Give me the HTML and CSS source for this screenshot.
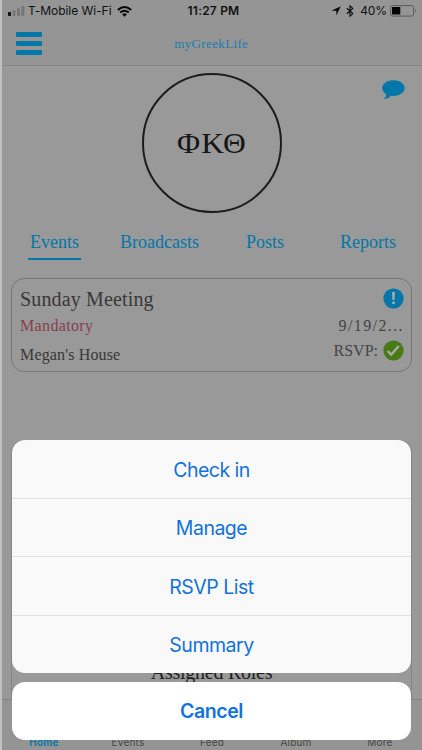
FILE: index.html
```html
<!DOCTYPE html>
<html lang="en">
<head>
<meta charset="utf-8">
<title>myGreekLife</title>
<link rel="stylesheet" href="styles.css">
</head>
<body>
<div class="phone">
  <header class="header">
    <div class="status">
      <div class="carrier">
        <svg width="17" height="10" viewBox="0 0 17 10"><rect x="0" y="6" width="3" height="4" rx=".7" fill="#111"/><g fill="#777"><rect x="4.5" y="4.3" width="3" height="5.7" rx=".7"/><rect x="9" y="2.4" width="3" height="7.6" rx=".7"/><rect x="13.4" y="0" width="3" height="10" rx=".7"/></g></svg>
        <span class="network">T-Mobile Wi-Fi</span>
        <svg class="wifi" width="15" height="11" viewBox="0 0 15 11" fill="none" stroke="#080808" stroke-width="2"><path d="M.8 4.1Q7.5-2 14.2 4.1M3.2 6.6Q7.5 2.8 11.8 6.6"/><path d="M5.1 8.4Q7.5 6.3 9.9 8.4L7.5 10.8Z" fill="#080808" stroke="none"/></svg>
      </div>
      <div class="clock">11:27 PM</div>
      <div class="power">
        <svg width="10" height="10" viewBox="0 0 10 10"><path d="M9.7.3 5.4 9.6V4.7H.4Z" fill="#080808"/></svg>
        <svg class="bluetooth" width="8" height="12" viewBox="0 0 8 12"><path d="M.8 3.2 6.8 8.6 4 11.2V.8L6.8 3.4.8 8.8" fill="none" stroke="#111" stroke-width="1.15"/></svg>
        <span class="percent">40%</span>
        <svg width="27" height="12" viewBox="0 0 27 12"><rect x=".6" y=".6" width="23" height="10.5" rx="2" fill="none" stroke="#5a5a5a"/><rect x="2" y="2" width="8.3" height="7.6" rx=".6" fill="#050505"/><path d="M25 3.8q2.2 2 0 4z" fill="#666"/></svg>
      </div>
    </div>
    <div class="navbar">
      <div class="menu"><i></i><i></i><i></i></div>
      <h1 class="brand">myGreekLife</h1>
    </div>
  </header>

  <main class="main">
    <section class="profile">
      <div class="crest"><span>ΦΚΘ</span></div>
      <svg class="chat" width="23" height="20" viewBox="0 0 23 20"><path d="M11.5.2C5.1.2.2 3.6.2 8c0 2.600 1.500 4.800 4 6.300-.2 2-1 3.500-2.500 4.800 2.700.2 5.200-1 7.100-3.300.9.1 1.800.2 2.700.2 6.300 0 11.200-3.500 11.200-7.900S17.800.2 11.500.2Z" fill="#0277a8"/></svg>
    </section>
    <nav class="tabs">
      <span class="tab tab-active">Events</span>
      <span class="tab">Broadcasts</span>
      <span class="tab">Posts</span>
      <span class="tab">Reports</span>
    </nav>
    <article class="event">
      <div class="details">
        <h2 class="title">Sunday Meeting</h2>
        <div class="mandatory">Mandatory</div>
        <div class="place">Megan's House</div>
      </div>
      <div class="meta">
        <svg width="21" height="21" viewBox="0 0 21 21"><circle cx="10.5" cy="10.5" r="10.1" fill="#0277a8"/><path d="M9 4h3l-.5 8H9.5Z" fill="#aaa"/><circle cx="10.5" cy="14.7" r="1.5" fill="#aaa"/></svg>
        <div class="date">9/19/2...</div>
        <div class="rsvp"><span>RSVP:</span><svg width="21" height="21" viewBox="0 0 21 21"><circle cx="10.5" cy="10.5" r="10.1" fill="#4a7a15"/><path d="m4.7 11 3.6 3.6 7.5-8.5" fill="none" stroke="#aaa" stroke-width="2.3"/></svg></div>
      </div>
    </article>
    <section class="roles"><h2>Assigned Roles</h2></section>
  </main>

  <footer class="footer">
    <span class="current">Home</span><span>Events</span><span>Feed</span><span>Album</span><span>More</span>
  </footer>

  <div class="sheet">
    <div class="options">
      <button class="option">Check in</button>
      <button class="option">Manage</button>
      <button class="option">RSVP List</button>
      <button class="option">Summary</button>
    </div>
    <button class="cancel">Cancel</button>
  </div>
</div>
</body>
</html>
```
FILE: styles.css
```css
* { box-sizing: border-box; }
body { margin: 0; font-family: "Liberation Serif", serif; }
h1, h2 { margin: 0; font-weight: 400; }
svg { display: block; flex: none; }
button { border: 0; padding: 0; background: none; }

.phone {
  position: relative;
  display: flex;
  flex-direction: column;
  width: 422px;
  height: 750px;
  overflow: hidden;
  background: #999;
  border-left: 2px solid #c0c0c0;
}
.header { height: 66px; background: #959595; border-bottom: 1px solid #848484; }
.status {
  display: grid;
  grid-template-columns: 1fr auto 1fr;
  height: 22px;
  align-items: center;
  padding: 0 5px 0 6px;
  font: 12px/22px Inter, sans-serif;
  color: #111;
}
.carrier, .power { display: flex; align-items: center; }
.network { margin-left: 3px; width: 84px; white-space: nowrap; letter-spacing: -.05px; }
.wifi { margin-left: 5px; }
.clock { font-weight: 600; letter-spacing: .2px; margin-left: 2px; }
.power { justify-content: flex-end; }
.bluetooth { margin-left: 5px; }
.percent { margin: 0 3px 0 6px; letter-spacing: -.1px; }
.navbar {
  display: grid;
  grid-template-columns: 1fr auto 1fr;
  align-items: center;
  height: 43px;
  padding: 0 15px 0 13.5px;
}
.menu { display: grid; gap: 4px; width: 26.5px; }
.menu i { height: 4.7px; border-radius: 1px; background: #0277a8; }
.brand { color: #1a7fae; font-size: 13px; letter-spacing: .35px; }

.main { flex: 1; display: flex; flex-direction: column; }
.profile { display: grid; grid-template-columns: 1fr 140px 1fr; height: 155px; padding: 7px 17px 0; }
.crest {
  grid-column: 2;
  display: grid;
  place-items: center;
  width: 140px;
  height: 140px;
  margin-left: -.5px;
  border: 2px solid #1c1c1c;
  border-radius: 50%;
  color: #161616;
  font-size: 29px;
  line-height: 32px;
}
.crest span { letter-spacing: 1px; margin-right: -1px; transform: scaleX(1.09); }
.chat { justify-self: end; margin-top: 7px; }
.tabs {
  display: grid;
  grid-template-columns: 90px 126px 94px auto;
  justify-items: start;
  height: 57px;
  padding: 9px 0 0 26px;
  color: #0277a8;
  font-size: 18px;
  line-height: 25px;
}
.tab { height: 30px; padding: 0 2px; }
.tab-active { border-bottom: 2px solid #0277a8; }
.event {
  display: flex;
  justify-content: space-between;
  height: 94px;
  margin: 0 10px 0 9px;
  padding: 9px 7px 8px 8px;
  border: 1px solid #777;
  border-radius: 13px;
  color: #383838;
}
.title { font-size: 20px; line-height: 22px; letter-spacing: .15px; }
.mandatory { margin-top: 5px; color: #87404f; font-size: 16px; line-height: 22px; letter-spacing: .35px; }
.place { margin-top: 8px; font-size: 16px; line-height: 20px; letter-spacing: .15px; }
.meta { display: flex; flex-direction: column; align-items: flex-end; color: #444; font-size: 16px; }
.date { margin-top: 7px; line-height: 20px; letter-spacing: 1.4px; }
.rsvp { display: flex; align-items: center; gap: 5px; height: 21px; margin-top: 4px; }
.roles {
  flex: 1;
  margin: 68px 10px 0 9px;
  border: 1px solid #858585;
  border-bottom: 0;
  border-radius: 13px 13px 0 0;
  padding-top: 219px;
  text-align: center;
  color: #202020;
}
.roles h2 { font-size: 20px; line-height: 24px; letter-spacing: -.25px; }
.footer {
  display: grid;
  grid-template-columns: repeat(5, 84px);
  height: 51px;
  padding-top: 36px;
  background: #949494;
  border-top: 1px solid #848484;
  color: #484848;
  text-align: center;
  font: 10px/13px Inter, sans-serif;
  letter-spacing: .2px;
}
.footer .current { color: #0277a8; font-weight: 600; }

.sheet {
  position: absolute;
  inset: 440px 11px 10px 10px;
  display: grid;
  grid-template-rows: 233px 58px;
  gap: 9px;
}
.options { display: grid; grid-template-rows: 58.5px 58.5px 58.5px 57.5px; overflow: hidden; border-radius: 13px; background: #f9f9f9; }
.option { padding-top: 2px; border-bottom: 1px solid #e1e1e2; color: #1172dc; font: 400 19.5px/24px Inter, sans-serif; letter-spacing: -.5px; }
.option:last-child { border: 0; }
.cancel { border-radius: 13px; background: #fff; color: #1172e2; font: 600 19.5px/24px Inter, sans-serif; letter-spacing: -.4px; }
```
